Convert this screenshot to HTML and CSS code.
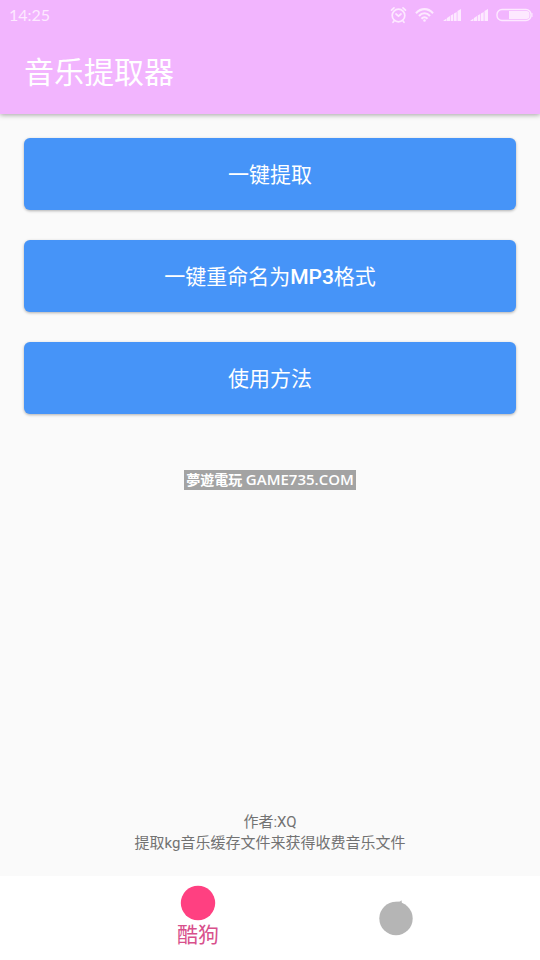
FILE: index.html
```html
<!DOCTYPE html>
<html lang="zh-CN">
<head>
<meta charset="utf-8">
<meta name="viewport" content="width=device-width, initial-scale=1">
<title>音乐提取器</title>
<link rel="stylesheet" href="styles.css">
</head>
<body>
<header class="app-bar">
  <div class="status">
    <time class="clock">14:25</time>
    <div class="status-icons">
      <svg class="icon-alarm" width="18" height="18" viewBox="0 0 18 18" fill="none" stroke="currentColor" stroke-width="1.700" stroke-linecap="round" aria-hidden="true">
        <circle cx="8.500" cy="9.500" r="6.300"/>
        <path d="M6 8l2.500 2.200L11 8M1.500 4.200l2.500-2.400M15.500 4.200L13 1.800M4 15l-1 1.300M13 15l1 1.300"/>
      </svg>
      <svg class="icon-wifi" width="20" height="14" viewBox="0 0 20 14" fill="none" stroke="currentColor" stroke-width="2.100" aria-hidden="true">
        <path d="M1 5.200C6-.2 13-.2 18 5.200M4 8c3.200-3.600 7.800-3.600 11 0M6.500 10.700c1.800-1.900 4.200-1.900 6 0"/>
        <circle cx="9.500" cy="12.500" r="1.300" fill="currentColor" stroke="none"/>
      </svg>
      <svg class="icon-signal" width="20" height="14" viewBox="0 0 20 14" fill="currentColor" aria-hidden="true">
        <path d="M1 13l3.500-2.500V13zM5 10l3-2v5H5zM8.700 7.500l2.600-1.500v7H8.700zM12 5.500L14.700 4v9H12zM15.500 3L19 1v12h-3.500z"/>
      </svg>
      <svg class="icon-signal" width="20" height="14" viewBox="0 0 20 14" fill="currentColor" aria-hidden="true">
        <path d="M1 13l3.500-2.500V13zM5 10l3-2v5H5zM8.700 7.500l2.600-1.500v7H8.700zM12 5.500L14.700 4v9H12zM15.500 3L19 1v12h-3.500z"/>
      </svg>
      <svg class="icon-battery" width="37" height="14" viewBox="0 0 37 14" aria-hidden="true">
        <rect x="1" y="1.500" width="34" height="11" rx="5" fill="none" stroke="currentColor" stroke-width="1.400"/>
        <path d="M13 3h17.500a3 3 0 0 1 3 3v2a3 3 0 0 1-3 3H13zM35.500 5h1v4h-1z" fill="currentColor"/>
      </svg>
    </div>
  </div>
  <h1 class="title">音乐提取器</h1>
</header>
<main class="content">
  <div class="actions">
    <button class="action" type="button">一键提取</button>
    <button class="action" type="button">一键重命名为<b>MP3</b>格式</button>
    <button class="action" type="button">使用方法</button>
  </div>
  <p class="site-mark">夢遊電玩 <span>GAME735.COM</span></p>
  <footer class="credits">
    <p>作者:XQ</p>
    <p>提取kg音乐缓存文件来获得收费音乐文件</p>
  </footer>
</main>
<nav class="tabs">
  <button class="tab tab-active" type="button" aria-current="page">
    <svg width="36" height="36" viewBox="0 0 36 36" fill="currentColor" aria-hidden="true"><circle cx="18" cy="18" r="17.200"/></svg>
    <span>酷狗</span>
  </button>
  <button class="tab" type="button" aria-label="其他">
    <svg width="36" height="36" viewBox="0 0 36 36" fill="currentColor" aria-hidden="true"><circle cx="18" cy="18.500" r="16.700"/><path d="M17 2l5-.5 1.500-1.300.5 4z"/></svg>
  </button>
</nav>
</body>
</html>
```

FILE: styles.css
```css
* {
  box-sizing: border-box;
}

body {
  margin: 0;
  min-height: 100vh;
  display: flex;
  flex-direction: column;
  background: #fafafa;
  color: #727272;
  font-family: Roboto, "Noto Sans CJK SC", sans-serif;
}

h1,
p {
  margin: 0;
}

button {
  border: 0;
  padding: 0;
  font-family: inherit;
  cursor: pointer;
}

svg {
  display: block;
}

.app-bar {
  background: #f2b5fe;
  color: #fff;
  box-shadow: 0 1px 5px rgba(0, 0, 0, 0.35);
}

.status {
  height: 30px;
  padding: 0 7px 0 9px;
  display: flex;
  align-items: center;
  justify-content: space-between;
  color: #fde9ff;
}

.clock {
  font-family: Lato, sans-serif;
  font-size: 16px;
  line-height: 30px;
}

.status-icons {
  display: flex;
  align-items: center;
  gap: 7px;
}

.title {
  padding: 2px 24px 0;
  font-size: 30px;
  font-weight: 400;
  line-height: 82px;
}

.content {
  flex: 1;
  padding: 24px 24px 22px;
  display: flex;
  flex-direction: column;
  align-items: center;
}

.actions {
  align-self: stretch;
  display: grid;
  gap: 30px;
}

.action {
  height: 72px;
  padding-bottom: 2px;
  border-radius: 6px;
  background: #4694f8;
  color: #fff;
  font-size: 21px;
  font-weight: 400;
  box-shadow: 0 1px 3px rgba(0, 0, 0, 0.3);
}

.action b {
  font-weight: 500;
}

.site-mark {
  margin-top: 56px;
  padding: 0 2px;
  background: #a3a3a3;
  color: #fff;
  font-family: "Open Sans", "Noto Sans CJK TC", sans-serif;
  font-size: 14px;
  font-weight: 600;
  line-height: 20px;
}

.site-mark span {
  font-size: 15px;
  line-height: 1;
}

.credits {
  margin-top: auto;
  font-size: 15px;
  line-height: 21px;
  text-align: center;
}

.tabs {
  height: 84px;
  display: flex;
  justify-content: center;
  background: #fff;
}

.tab {
  width: 144px;
  display: flex;
  flex-direction: column;
  align-items: center;
  justify-content: center;
  background: none;
  color: #b5b5b5;
  font-size: 21px;
  line-height: 28px;
}

.tab-active {
  width: 252px;
  padding-bottom: 2px;
  color: #ff4081;
}

.tab-active span {
  color: #d8508c;
}
```
